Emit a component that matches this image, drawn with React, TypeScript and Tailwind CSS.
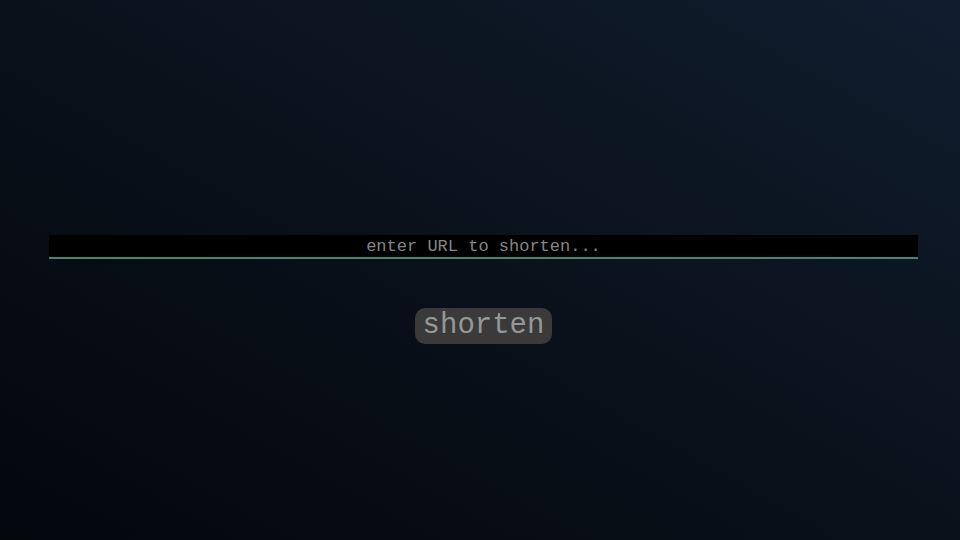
import React, { useState } from 'react';

const App: React.FC = () => {
    const [url, setUrl] = useState('');

    return (
        <div className="w-[960px] h-[540px] overflow-hidden bg-linear-to-tr from-[#04070c] via-[#0a111b] to-[#101d2e] pt-[235px] font-['Courier_New','Liberation_Mono',monospace]">
            <div className="pl-[49px]">
                <input
                    type="text"
                    value={url}
                    onChange={(e) => setUrl(e.target.value)}
                    placeholder="enter URL to shorten..."
                    className="block w-[869px] h-[24px] bg-black border-b-2 border-[#3d8a72] text-center text-[17px] leading-[22px] text-[#8a8a8a] placeholder:text-[#858585] outline-none font-['Courier_New','Liberation_Mono',monospace]"
                />
            </div>
            <div className="flex justify-center mt-[49px] pl-[7px]">
                <button className="h-[36px] px-[8px] rounded-[10px] bg-[#3a3a3a] text-[29px] leading-[36px] text-[#979797] font-['Courier_New','Liberation_Mono',monospace]">
                    shorten
                </button>
            </div>
        </div>
    );
};

export default App;
